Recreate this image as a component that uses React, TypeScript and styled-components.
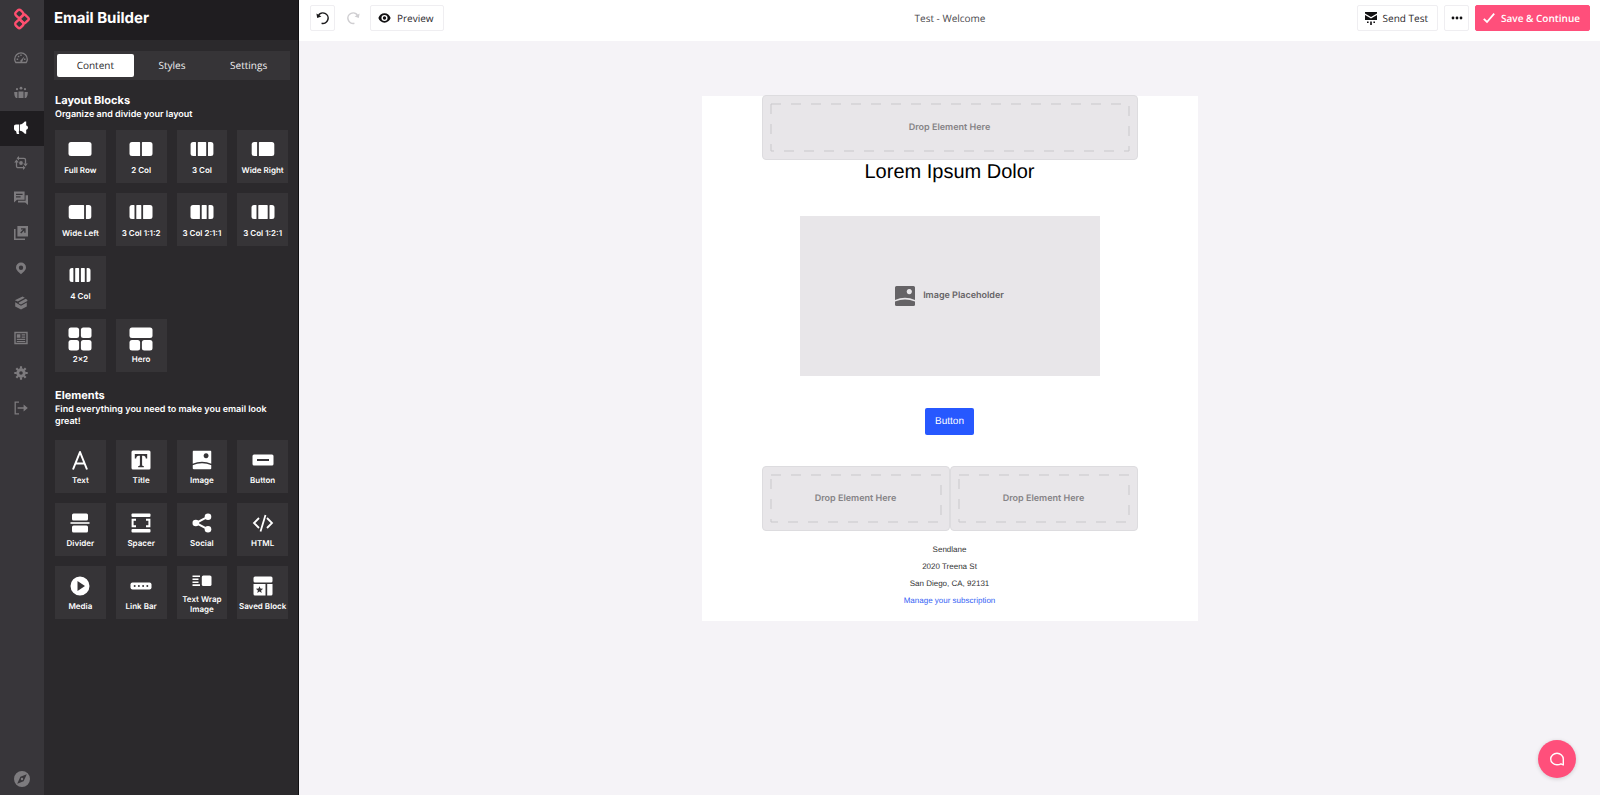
import React from "react";
import styled, { createGlobalStyle, css } from "styled-components";

const ui = `"Open Sans", "Noto Sans", sans-serif`;
const inter = `Inter, "Noto Sans", sans-serif`;
const mail = `"Liberation Sans", Arial, sans-serif`;

const GlobalStyle = createGlobalStyle`
  *, *::before, *::after { box-sizing: border-box; }
  body {
    margin: 0;
    background: #f5f3f7;
    font-family: ${inter};
    text-rendering: geometricPrecision;
  }
  button { font-family: inherit; cursor: pointer; text-rendering: inherit; }
  svg { display: block; flex: none; }
  h1, h2, p { margin: 0; }
`;

const Shell = styled.div`
  display: flex;
  min-height: 100vh;
`;

/* ---------- navigation rail ---------- */
const Rail = styled.nav`
  display: flex;
  flex-direction: column;
  flex: none;
  width: 44px;
  background: #38363a;
`;
const RailLogo = styled.a`
  display: grid;
  place-items: center;
  height: 41px;
  padding-bottom: 4px;
`;
const RailLink = styled.a<{ $active?: boolean }>`
  display: grid;
  place-items: center;
  height: 35px;
  padding: 0 2px 2px 0;
  color: ${(p) => (p.$active ? "#ffffff" : "#7d7b7e")};
  background: ${(p) => (p.$active ? "#1f1d20" : "transparent")};
`;
const RailFoot = styled(RailLink)`
  height: 32px;
  margin-top: auto;
  padding: 0;
`;

/* ---------- block panel ---------- */
const Panel = styled.aside`
  flex: none;
  width: 255px;
  background: #2b292c;
  border-right: 1px solid #111012;
  color: #ffffff;
`;
const PanelHeader = styled.header`
  display: flex;
  align-items: center;
  height: 40px;
  padding: 0 10px 4px;
  background: #1f1d20;
`;
const PanelTitle = styled.h1`
  font-size: 15px;
  line-height: 20px;
  font-weight: 700;
`;
const Tabs = styled.div`
  display: grid;
  grid-template-columns: repeat(3, 1fr);
  margin: 11px 8px 0 10px;
  padding: 3px;
  background: #363437;
`;
const Tab = styled.button<{ $active?: boolean }>`
  height: 23px;
  padding: 0 0 2px;
  border: 0;
  border-radius: 2px;
  font: 500 10px/14px ${ui};
  color: ${(p) => (p.$active ? "#2b292c" : "#f0eff1")};
  background: ${(p) => (p.$active ? "#ffffff" : "transparent")};
`;
const Section = styled.section`
  padding: 11px 10px 0 11px;
  & + & { padding-top: 14px; }
`;
const SectionTitle = styled.h2`
  font-size: 11px;
  line-height: 18px;
  font-weight: 700;
`;
const SectionText = styled.p`
  font-size: 9px;
  line-height: 12px;
  font-weight: 600;
`;
const TileGrid = styled.div<{ $gapTop?: number }>`
  display: grid;
  grid-template-columns: repeat(4, 1fr);
  gap: 10px;
  margin-top: ${(p) => p.$gapTop ?? 9}px;
`;
const Tile = styled.button<{ $newRow?: boolean }>`
  display: flex;
  flex-direction: column;
  align-items: center;
  justify-content: center;
  gap: 3px;
  height: 53px;
  padding: 0 0 1px;
  border: 0;
  color: #ffffff;
  background: #363437;
  font-size: 8px;
  line-height: 10px;
  font-weight: 600;
  ${(p) => p.$newRow && css`grid-column-start: 1;`}
`;
const TileLabel = styled.span<{ $wrap?: boolean }>`
  white-space: ${(p) => (p.$wrap ? "normal" : "nowrap")};
`;

/* ---------- editor ---------- */
const Editor = styled.div`
  display: flex;
  flex-direction: column;
  flex: 1;
  min-width: 0;
`;
const Toolbar = styled.header`
  display: grid;
  grid-template-columns: 1fr auto 1fr;
  align-items: center;
  height: 41px;
  padding: 0 10px 5px 11px;
  background: #ffffff;
  font-family: ${ui};
`;
const Group = styled.div<{ $end?: boolean }>`
  display: flex;
  gap: ${(p) => (p.$end ? 6 : 5)}px;
  justify-content: ${(p) => (p.$end ? "flex-end" : "flex-start")};
`;
const DocTitle = styled.div`
  font-size: 10px;
  line-height: 14px;
  font-weight: 500;
  color: #4a484c;
`;
const ToolButton = styled.button<{ $primary?: boolean; $plain?: boolean }>`
  display: flex;
  align-items: center;
  justify-content: center;
  gap: 6px;
  height: 26px;
  padding: 0 9px 0 7px;
  border: 1px solid ${(p) => (p.$primary ? "#ff4f7b" : p.$plain ? "transparent" : "#efeef1")};
  border-radius: 2px;
  font-size: 10px;
  line-height: 14px;
  font-weight: ${(p) => (p.$primary ? 600 : 500)};
  white-space: nowrap;
  color: ${(p) => (p.$primary ? "#ffffff" : "#2b292c")};
  background: ${(p) => (p.$primary ? "#ff4f7b" : "#ffffff")};
`;
const IconButton = styled(ToolButton)`
  padding: 0;
  width: 25px;
`;
const Canvas = styled.main`
  flex: 1;
  padding: 55px 20px 60px;
`;
const Letter = styled.article`
  display: flow-root;
  max-width: 496px;
  margin: 0 auto;
  padding: 0 60px 12px;
  background: #ffffff;
  font-family: ${mail};
  text-align: center;
`;
const DropRow = styled.div`
  display: flex;
  margin-top: -1px;
`;
const DropBox = styled.div`
  display: grid;
  grid-template: minmax(0, 1fr) / minmax(0, 1fr);
  flex: 1;
  height: 65px;
  padding: 8px;
  border: 1px solid #dddcdf;
  border-radius: 4px;
  background: #e8e6e9;
`;
const DropLabel = styled.span`
  grid-area: 1 / 1;
  place-self: center;
  font: 600 9px/12px ${inter};
  color: #858386;
`;
const DropOutline = styled.svg`
  grid-area: 1 / 1;
  width: 100%;
  height: 100%;
  overflow: visible;
`;
const LetterTitle = styled.h2`
  font-size: 20px;
  line-height: 24px;
  font-weight: 400;
  color: #000000;
`;
const ImageBox = styled.div`
  display: flex;
  align-items: center;
  justify-content: center;
  gap: 8px;
  max-width: 300px;
  height: 160px;
  margin: 32px auto;
  background: #e8e6e9;
  font: 600 9px/12px ${inter};
  color: #656366;
`;
const LetterButton = styled.button`
  height: 27px;
  margin-bottom: 32px;
  padding: 0 10px;
  border: 0;
  border-radius: 2px;
  background: #2758ff;
  color: #ffffff;
  font: 400 10px/14px ${mail};
`;
const Footer = styled.footer`
  display: flex;
  flex-direction: column;
  align-items: center;
  margin-top: 10px;
  font-size: 8px;
  line-height: 17px;
  color: #333333;
  a { color: #3563f5; text-decoration: none; }
`;
const ChatButton = styled.button`
  position: fixed;
  right: 24px;
  bottom: 17px;
  display: grid;
  place-items: center;
  width: 38px;
  height: 38px;
  padding: 0;
  border: 0;
  border-radius: 50%;
  color: #ffffff;
  background: #ff4f7b;
  box-shadow: 0 1px 4px rgba(0, 0, 0, 0.16);
`;

/* ---------- icons ---------- */
const RailIcon = ({ children }: { children: React.ReactNode }) => (
  <svg width="14" height="14" viewBox="0 0 14 14" fill="currentColor" aria-hidden="true">{children}</svg>
);
const line = { fill: "none", stroke: "currentColor", strokeWidth: 1.3 };

const nav: { name: string; active?: boolean; icon: React.ReactNode }[] = [
  { name: "Dashboard", icon: <><path {...line} strokeLinejoin="round" d="M1.800 11.500C.9 10.400.7 9.300.7 8.200a6.300 6.300 0 0 1 12.600 0c0 1.100-.2 2.200-1.100 3.300z" /><path d="M5.800 10.200l4.600-5-2.400 6zM2.600 7.600h1.600v1.400H2.600zM3.800 4.800h1.500v1.400H3.800zM6.300 3.600h1.400v1.500H6.300zM10 7.600h1.500v1.400H10z" /></> },
  { name: "Audience", icon: <><circle cx="7" cy="2.200" r="1.400" /><circle cx="3" cy="3.200" r="1.100" /><circle cx="11" cy="3.200" r="1.100" /><path d="M4.500 5.600h5V12h-5zM.2 6h3.200v6H2C.8 11 .2 9 .2 6zM10.600 6h3.200c0 3-.6 5-1.800 6h-1.400z" /></> },
  { name: "Campaigns", active: true, icon: <path d="M0 5.500C0 4.300.8 3.600 2 3.600h3v7H4.600l.6 2.400H2.800L2 10C.8 10 0 9 0 7.800zM5.800 3.600C8 3.400 9.600 2 10.800.6h1.400v3.800c1.200.2 1.800 1 1.800 2.200s-.6 2-1.800 2.200v4h-1.400C9.600 11.200 8 10 5.800 9.800z" /> },
  { name: "Automations", icon: <><path {...line} d="M4.500 2.300H10A1.500 1.500 0 0 1 11.500 3.800v4M9.500 11.700H4A1.500 1.500 0 0 1 2.500 10.200V6" /><path d="M.2 6.500l2.300-3 2.300 3zM9.200 7.500h4.600l-2.300 3zM5 0v4.600L2.600 2.300zM9 9.400V14l2.400-2.300z" /><circle cx="7" cy="7" r="1.900" /></> },
  { name: "Conversations", icon: <path fillRule="evenodd" d="M0 .6h10.600v8.200H3L0 11.400zM2 2.800V4h6.600V2.800zM2 5.200v1.200h4.600V5.200zM11.600 4.200H14V14l-2.800-2.400H4V9.800h7.600z" /> },
  { name: "Forms", icon: <path fillRule="evenodd" d="M3.400 0H14v10.600H3.400zM7 2.200v1.400h2.200L6.200 6.600l1 1 3-3v2.200h1.400V2.200zM0 3h1.600v9.400H11V14H0z" /> },
  { name: "Beacon", icon: <path fillRule="evenodd" d="M7 1.500a5 5 0 0 1 5 5c0 3-3 4.500-5 6.800C5 11 2 9.500 2 6.500a5 5 0 0 1 5-5zM7 4.500a2.200 2.200 0 1 0 0 4.400 2.200 2.200 0 0 0 0-4.400z" /> },
  { name: "Store", icon: <path d="M.8 4.200L8.600.4l2.200 1.400L3.800 5.600zM4.800 6.400l7-3.700L13.400 4v1L7 8.400 4.800 7.400zM1.200 6.200L7 9.800l5.800-3.400v4L7 13.600l-5.800-3.200z" /> },
  { name: "Reports", icon: <path fillRule="evenodd" d="M.3.800h13.400v12.400H.3zM1.700 2.200v9.600h10.600V2.200zM2.800 3.300h3.600v3.400H2.800zM7.600 3.300h3.600v1.200H7.600zM7.600 5.600h3.600v1.200H7.600zM2.800 7.800h8.400V9H2.800zM2.800 9.900h8.400V11H2.800z" /> },
  { name: "Settings", icon: <><path fillRule="evenodd" d="M7 2.300a4.700 4.700 0 1 1 0 9.400 4.700 4.700 0 0 1 0-9.400zM7 5.200a1.800 1.800 0 1 0 0 3.600 1.800 1.800 0 0 0 0-3.600z" /><path stroke="currentColor" strokeWidth="2.200" d="M7 .3v2.500M7 11.200v2.500M.3 7h2.500M11.200 7h2.500M2.300 2.300L4 4M10 10l1.700 1.700M11.700 2.300L10 4M4 10l-1.700 1.700" /></> },
  { name: "Log out", icon: <><path {...line} d="M5 1.200H1.200v11.600H5" /><path d="M3.600 6.200h6V3.400L13.800 7l-4.200 3.600V7.800h-6z" /></> },
];

/* Row of columns with rounded outer corners, one entry per column width. */
const Columns = ({ widths }: { widths: number[] }) => {
  const gap = 1.8;
  const total = widths.reduce((a, b) => a + b, 0) + gap * (widths.length - 1);
  let x = (24 - total) / 2;
  return (
    <svg width="24" height="24" viewBox="0 0 24 24" fill="currentColor" aria-hidden="true">
      {widths.map((w, i) => {
        const left = x;
        x += w + gap;
        const l = i === 0 ? 2.5 : 0.6;
        const r = i === widths.length - 1 ? 2.5 : 0.6;
        return (
          <path key={i} d={`M${left + l} 4h${w - l - r}q${r} 0 ${r} ${r}v${14 - 2 * r}q0 ${r} ${-r} ${r}h${-(w - l - r)}q${-l} 0 ${-l} ${-l}v${-(14 - 2 * l)}q0 ${-l} ${l} ${-l}z`} />
        );
      })}
    </svg>
  );
};
const Glyph = ({ h = 24, children }: { h?: number; children: React.ReactNode }) => (
  <svg width="24" height={h} viewBox={`0 0 24 ${h}`} fill="currentColor" aria-hidden="true">{children}</svg>
);
const Picture = ({ size }: { size: number }) => (
  <svg width={size} height={size} viewBox="0 0 20 20" fill="currentColor" aria-hidden="true">
    <path fillRule="evenodd" d="M1.500 0h17a1.500 1.500 0 0 1 1.500 1.500V14Q10 9.500 0 14V1.500A1.500 1.500 0 0 1 1.500 0zM14.300 3a2.600 2.600 0 1 0 .01 0z" />
    <path d="M0 15.600Q10 11.300 20 15.600v2.900a1.500 1.500 0 0 1-1.500 1.500h-17A1.500 1.500 0 0 1 0 18.500z" />
  </svg>
);

const blocks: { name: string; newRow?: boolean; icon: React.ReactNode }[] = [
  { name: "Full Row", icon: <Columns widths={[23]} /> },
  { name: "2 Col", icon: <Columns widths={[10.6, 10.6]} /> },
  { name: "3 Col", icon: <Columns widths={[5.4, 8.4, 5.4]} /> },
  { name: "Wide Right", icon: <Columns widths={[5.4, 15.4]} /> },
  { name: "Wide Left", icon: <Columns widths={[15.4, 5.4]} /> },
  { name: "3 Col 1:1:2", icon: <Columns widths={[5, 5, 9.4]} /> },
  { name: "3 Col 2:1:1", icon: <Columns widths={[9.4, 5, 5]} /> },
  { name: "3 Col 1:2:1", icon: <Columns widths={[5, 9.4, 5]} /> },
  { name: "4 Col", icon: <Columns widths={[3.9, 3.9, 3.9, 3.9]} /> },
  { name: "2×2", newRow: true, icon: <Glyph><rect x=".5" y=".5" width="10.600" height="10.600" rx="2.500" /><rect x="12.900" y=".5" width="10.600" height="10.600" rx="2.500" /><rect x=".5" y="12.900" width="10.600" height="10.600" rx="2.500" /><rect x="12.900" y="12.900" width="10.600" height="10.600" rx="2.500" /></Glyph> },
  { name: "Hero", icon: <Glyph><rect x=".5" y=".5" width="23" height="10.600" rx="2.500" /><rect x=".5" y="12.900" width="10.600" height="10.600" rx="2.500" /><rect x="12.900" y="12.900" width="10.600" height="10.600" rx="2.500" /></Glyph> },
];

const elements: { name: string; wrap?: boolean; icon: React.ReactNode }[] = [
  { name: "Text", icon: <Glyph><path fill="none" stroke="currentColor" strokeWidth="2" strokeLinejoin="round" d="M5 21.500L12 4l7 17.500M7.400 15.600h9.200" /></Glyph> },
  { name: "Title", icon: <Glyph><path fillRule="evenodd" d="M4 2.500h16q1.500 0 1.500 1.500v16q0 1.500-1.500 1.500H4q-1.500 0-1.500-1.500V4q0-1.500 1.500-1.500zM5.800 6v4.500h1.400c.2-2 .9-2.800 2.600-2.800h1.100v9c0 1-.4 1.200-1.700 1.300v1.300h5.600V18c-1.300-.1-1.700-.3-1.700-1.300v-9h1.100c1.700 0 2.400.8 2.600 2.800h1.400V6z" /></Glyph> },
  { name: "Image", icon: <Glyph><svg x="2.500" y="2.500" width="19" height="19" viewBox="0 0 20 20"><Picture size={20} /></svg></Glyph> },
  { name: "Button", icon: <Glyph><path fillRule="evenodd" d="M3 6.500h18q1.500 0 1.500 1.500v8q0 1.500-1.500 1.500H3q-1.500 0-1.500-1.500V8q0-1.500 1.500-1.500zM6 11v2h12v-2z" /></Glyph> },
  { name: "Divider", icon: <Glyph><rect x="4" y="2.500" width="16" height="7" rx="1.500" /><rect x="2.500" y="11.200" width="19" height="1.600" /><rect x="4" y="14.500" width="16" height="7" rx="1.500" /></Glyph> },
  { name: "Spacer", icon: <Glyph><rect x="2.500" y="2.500" width="19" height="3.600" rx="1" /><rect x="2.500" y="17.900" width="19" height="3.600" rx="1" /><path fill="none" stroke="currentColor" strokeWidth="2" d="M7 8.800H3.600v6.400H7M17 8.800h3.400v6.400H17" /></Glyph> },
  { name: "Social", icon: <Glyph><circle cx="18" cy="5.700" r="3.300" /><circle cx="18" cy="18.300" r="3.300" /><circle cx="5.800" cy="12" r="3.300" /><path fill="none" stroke="currentColor" strokeWidth="2" d="M18 5.700L6 12l12 6.300" /></Glyph> },
  { name: "HTML", icon: <Glyph><path fill="none" stroke="currentColor" strokeWidth="1.800" d="M8 7l-5 5 5 5M16 7l5 5-5 5M14.500 4l-5 16.500" /></Glyph> },
  { name: "Media", icon: <Glyph><path fillRule="evenodd" d="M12 2.500a9.500 9.500 0 1 1 0 19 9.500 9.500 0 0 1 0-19zM9.500 7v10l7.500-5z" /></Glyph> },
  { name: "Link Bar", icon: <Glyph><rect x="1.500" y="8.500" width="21" height="7" rx="2" /><g fill="#363437"><circle cx="5.700" cy="12" r="1" /><circle cx="9.900" cy="12" r="1" /><circle cx="14.100" cy="12" r="1" /><circle cx="18.300" cy="12" r="1" /></g></Glyph> },
  { name: "Text Wrap Image", wrap: true, icon: <Glyph h={20}><path d="M2.500 4.500h7.500v1.600H2.500zM2.500 7.400h6v1.600h-6zM2.500 10.400h6V12h-6zM2.500 13.300h7.500v1.600H2.500z" /><rect x="11.800" y="4.500" width="9.700" height="10.500" rx="1.600" /></Glyph> },
  { name: "Saved Block", icon: <Glyph><rect x="2.500" y="2.500" width="19" height="6" rx="1.500" /><path fillRule="evenodd" d="M2.500 10h12v11.500H4q-1.500 0-1.500-1.500zM8.500 12.200l-1 2.300-2.600.2 2 1.700-.6 2.500 2.200-1.300 2.200 1.300-.6-2.500 2-1.700-2.600-.2z" /><path d="M16.200 10h5.300v10q0 1.500-1.500 1.500h-3.800z" /></Glyph> },
];

const TurnIcon = ({ flip }: { flip?: boolean }) => {
  const color = flip ? "#cfced1" : "#1b1a1c";
  return (
    <svg width="14" height="14" viewBox="0 0 14 14" aria-hidden="true">
      <g transform={flip ? "matrix(-1 0 0 1 14 0)" : undefined}>
        <path fill="none" stroke={color} strokeWidth="1.500" d="M2.300 4.800A5.200 5.200 0 1 1 5.600 12.200" />
        <path fill={color} d="M.4 2.600l.8 4.400 4.200-1.600z" />
      </g>
    </svg>
  );
};

const Drop = () => (
  <DropBox>
    <DropOutline aria-hidden="true">
      <rect width="100%" height="100%" fill="none" stroke="#c9c8cb" strokeDasharray="10 10" />
    </DropOutline>
    <DropLabel>Drop Element Here</DropLabel>
  </DropBox>
);

export default function App() {
  return (
    <Shell>
      <GlobalStyle />
      <Rail aria-label="Main">
        <RailLogo href="#" aria-label="Home">
          <svg width="18" height="22" viewBox="0 0 18 22" fill="none" stroke="#ff4f6f" strokeWidth="2.400" aria-hidden="true">
            <rect x="2.800" y="2.300" width="7" height="7" rx="2.200" transform="rotate(45 6.300 5.800)" />
            <rect x="7.900" y="7.400" width="7" height="7" rx="1.600" transform="rotate(45 11.400 10.900)" />
            <rect x="2.800" y="12.500" width="7" height="7" rx="2.200" transform="rotate(45 6.300 16)" />
          </svg>
        </RailLogo>
        {nav.map((n) => (
          <RailLink key={n.name} href="#" aria-label={n.name} $active={n.active}>
            <RailIcon>{n.icon}</RailIcon>
          </RailLink>
        ))}
        <RailFoot href="#" aria-label="Explore">
          <svg width="16" height="16" viewBox="0 0 16 16" fill="currentColor" aria-hidden="true">
            <path fillRule="evenodd" d="M8 0a8 8 0 1 1 0 16A8 8 0 0 1 8 0zM12.800 3.200L6.400 5.800 3.200 12.800l6.400-2.600zM8 6.800a1.200 1.200 0 1 1 0 2.400 1.200 1.200 0 0 1 0-2.400z" />
          </svg>
        </RailFoot>
      </Rail>

      <Panel>
        <PanelHeader><PanelTitle>Email Builder</PanelTitle></PanelHeader>
        <Tabs role="tablist">
          <Tab role="tab" aria-selected="true" $active>Content</Tab>
          <Tab role="tab" aria-selected="false">Styles</Tab>
          <Tab role="tab" aria-selected="false">Settings</Tab>
        </Tabs>
        <Section>
          <SectionTitle>Layout Blocks</SectionTitle>
          <SectionText>Organize and divide your layout</SectionText>
          <TileGrid>
            {blocks.map((b) => (
              <Tile key={b.name} $newRow={b.newRow}>{b.icon}<TileLabel>{b.name}</TileLabel></Tile>
            ))}
          </TileGrid>
        </Section>
        <Section>
          <SectionTitle>Elements</SectionTitle>
          <SectionText>Find everything you need to make you email look great!</SectionText>
          <TileGrid $gapTop={12}>
            {elements.map((e) => (
              <Tile key={e.name}>{e.icon}<TileLabel $wrap={e.wrap}>{e.name}</TileLabel></Tile>
            ))}
          </TileGrid>
        </Section>
      </Panel>

      <Editor>
        <Toolbar>
          <Group>
            <IconButton aria-label="Undo"><TurnIcon /></IconButton>
            <IconButton aria-label="Redo" $plain><TurnIcon flip /></IconButton>
            <ToolButton>
              <svg width="13" height="12" viewBox="0 0 14 12" fill="#111012" aria-hidden="true">
                <path fillRule="evenodd" d="M7 1c3.200 0 5.400 2 6.600 5-1.200 3-3.400 5-6.600 5S1.600 9 .4 6C1.600 3 3.800 1 7 1zM7 2.700a3.300 3.300 0 1 0 0 6.600 3.300 3.300 0 0 0 0-6.600zM7 4.200a1.800 1.800 0 1 1 0 3.600 1.800 1.800 0 0 1 0-3.600z" />
              </svg>
              Preview
            </ToolButton>
          </Group>
          <DocTitle>Test - Welcome</DocTitle>
          <Group $end>
            <ToolButton>
              <svg width="12" height="14" viewBox="1 0 12 14" fill="#111012" aria-hidden="true">
                <path d="M1 1h12v1.400L7 6 1 2.400zM1 4l6 3.600L13 4v5H1zM3 10.500h1.600V12H3zM6.200 10.500h1.600V14H6.200zM9.400 10.500H11V12H9.400z" />
              </svg>
              Send Test
            </ToolButton>
            <IconButton aria-label="More">
              <svg width="12" height="4" viewBox="0 0 12 4" fill="#111012" aria-hidden="true"><circle cx="2" cy="2" r="1.400" /><circle cx="6" cy="2" r="1.400" /><circle cx="10" cy="2" r="1.400" /></svg>
            </IconButton>
            <ToolButton $primary>
              <svg width="12" height="12" viewBox="0 0 12 12" fill="none" stroke="#ffffff" strokeWidth="1.800" aria-hidden="true"><path d="M.8 6.800L4 10l7.200-8.400" /></svg>
              Save &amp; Continue
            </ToolButton>
          </Group>
        </Toolbar>
        <Canvas>
          <Letter>
            <DropRow><Drop /></DropRow>
            <LetterTitle>Lorem Ipsum Dolor</LetterTitle>
            <ImageBox><Picture size={20} />Image Placeholder</ImageBox>
            <LetterButton>Button</LetterButton>
            <DropRow><Drop /><Drop /></DropRow>
            <Footer>
              <span>Sendlane</span>
              <span>2020 Treena St</span>
              <span>San Diego, CA, 92131</span>
              <a href="#">Manage your subscription</a>
            </Footer>
          </Letter>
        </Canvas>
      </Editor>
      <ChatButton aria-label="Chat">
        <svg width="16" height="16" viewBox="0 0 16 16" fill="none" stroke="currentColor" strokeWidth="1.400" strokeLinejoin="round" aria-hidden="true">
          <path d="M14.300 14V8a6.300 5.800 0 1 0-6.300 5.800c1.500 0 2.800-.3 4-1z" />
        </svg>
      </ChatButton>
    </Shell>
  );
}
